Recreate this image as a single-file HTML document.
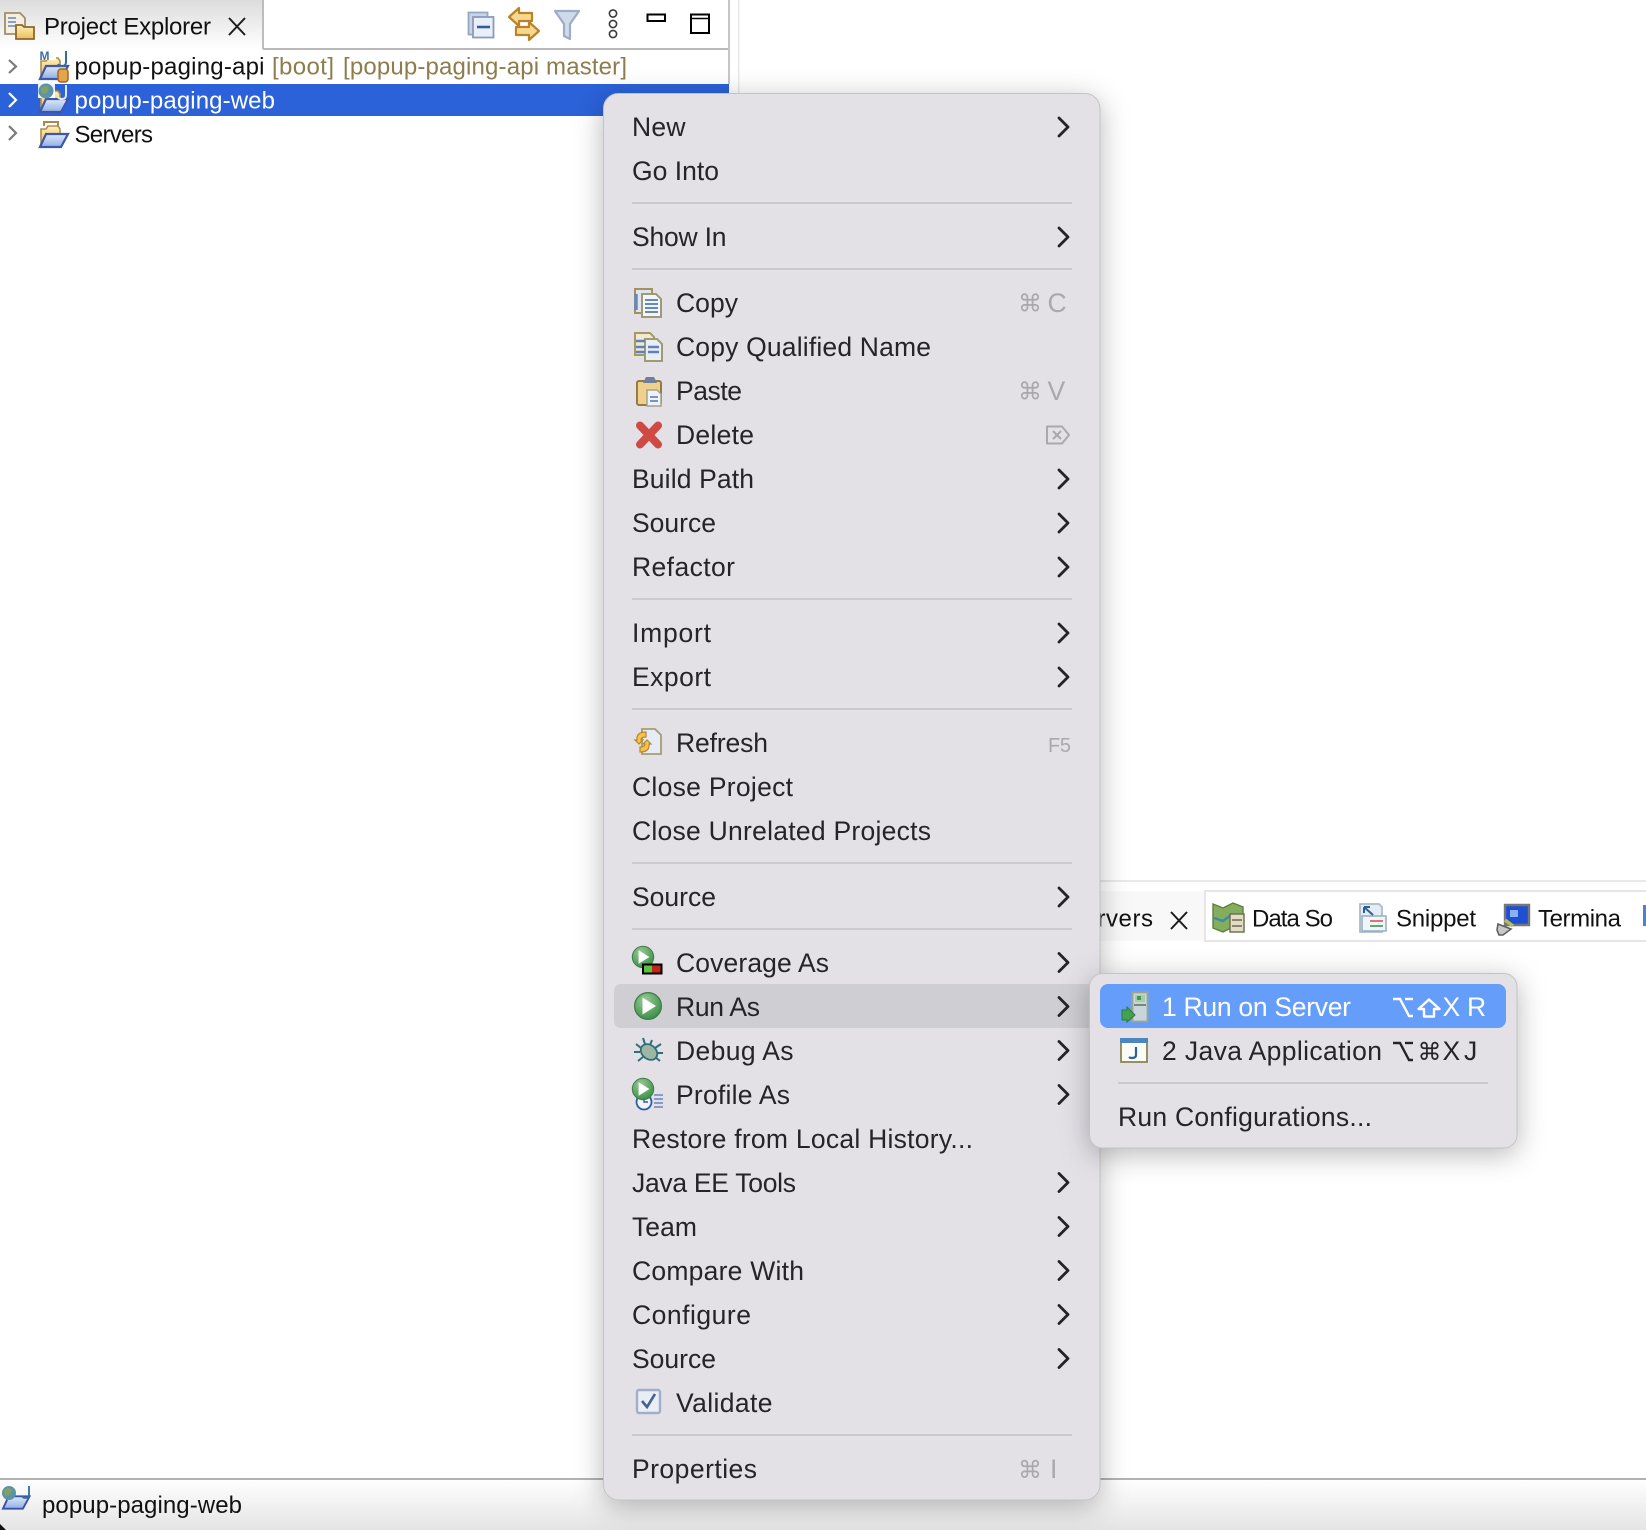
<!DOCTYPE html>
<html>
<head>
<meta charset="utf-8">
<title>Project Explorer</title>
<style>
html,body{margin:0;padding:0;background:#fff;width:1646px;height:1530px;overflow:hidden}
svg{display:block}
text{font-family:"Liberation Sans","DejaVu Sans",sans-serif;font-size:26.5px;fill:#252427}
.t{font-size:24px;fill:#111}
.g{fill:#a9a8ac}
.o{font-size:24px;fill:#8f7c4d}
.c{fill:none;stroke:#232225;stroke-width:2.8;stroke-linecap:round;stroke-linejoin:round}
</style>
</head>
<body>
<svg width="1646" height="1530" viewBox="0 0 1646 1530" xmlns="http://www.w3.org/2000/svg">
<defs>
<linearGradient id="top" x1="0" y1="0" x2="0" y2="1"><stop offset="0" stop-color="#dcdcdc"/><stop offset="1" stop-color="#fff"/></linearGradient>
<linearGradient id="bot" x1="0" y1="0" x2="0" y2="1"><stop offset="0" stop-color="#fff"/><stop offset="1" stop-color="#e4e4e4"/></linearGradient>
<linearGradient id="fol" x1="0" y1="0" x2="0" y2="1"><stop offset="0" stop-color="#fff0b8"/><stop offset="1" stop-color="#ecbd5c"/></linearGradient>
<linearGradient id="blu" x1="0" y1="0" x2="0" y2="1"><stop offset="0" stop-color="#dfe9f9"/><stop offset="1" stop-color="#8fb0e4"/></linearGradient>
<radialGradient id="grn" cx=".4" cy=".3" r=".8"><stop offset="0" stop-color="#9cc99a"/><stop offset="1" stop-color="#2f8a3c"/></radialGradient>
<filter id="sh" x="-20%" y="-20%" width="140%" height="140%"><feDropShadow dx="0" dy="6" stdDeviation="14" flood-color="#000" flood-opacity=".28"/></filter>
<g id="ofol">
<path d="M2 8h5l2-3h10l2 3v15H2z" fill="url(#fol)" stroke="#ad8f50" stroke-width="1.6"/>
<path d="M1 26L7 13h22l-7 13z" fill="url(#blu)" stroke="#3f56ad" stroke-width="2.2"/>
</g>
<g id="play">
<circle cx="0" cy="0" r="13.4" fill="url(#grn)" stroke="#3d7a45" stroke-width="1.2"/>
<path d="M-5.5-8.5L8 0-5.5 8.5z" fill="#fff"/>
</g>
</defs>

<!-- top tab bar -->
<rect x="0" y="0" width="263" height="49" fill="url(#top)"/>
<rect x="262" y="0" width="2" height="49" fill="#bdbdbd"/>
<rect x="263" y="48" width="466" height="2" fill="#b9b9b9"/>
<rect x="728" y="0" width="2" height="84" fill="#c6c6c6"/>
<rect x="738" y="0" width="1.5" height="94" fill="#e9e9e9"/>

<!-- project explorer tab icon -->
<path d="M5 13h15l5 5v16H5z" fill="#f3efe2" stroke="#a08f66" stroke-width="1.8"/>
<path d="M8 18h8M8 22h8M8 26h8" stroke="#7d97bf" stroke-width="1.8"/>
<path d="M16 25h6l2 2h10v12H16z" fill="url(#fol)" stroke="#8f672b" stroke-width="1.8"/>
<text x="44" y="34.500" class="t" textLength="167" lengthAdjust="spacing">Project Explorer</text>
<path d="M229 18l16 17M245 18l-16 17" stroke="#1c1c1c" stroke-width="2" fill="none"/>

<!-- toolbar -->
<rect x="468.500" y="12.500" width="19" height="22" fill="#c9d5e6" stroke="#95a8c3" stroke-width="1.800"/>
<rect x="473" y="17" width="20.500" height="20.500" fill="#e8eff9" stroke="#8b9bb4" stroke-width="1.800"/>
<path d="M477 27h13" stroke="#2f5f96" stroke-width="2.600"/>
<path d="M509 17l10-9v5h13v8h-13v5z" fill="#f8d88f" stroke="#b98428" stroke-width="2.200" stroke-linejoin="round"/>
<path d="M539 31l-10 9v-5h-13v-8h13v-5z" fill="#f8d88f" stroke="#b98428" stroke-width="2.200" stroke-linejoin="round"/>
<path d="M555 11h24l-9 13v15l-6-3V24z" fill="#cfdbea" stroke="#9cadc5" stroke-width="2.200" stroke-linejoin="round"/>
<g fill="none" stroke="#3a3a3a" stroke-width="1.600"><circle cx="613" cy="13.500" r="3.600"/><circle cx="613" cy="24" r="3.600"/><circle cx="613" cy="34" r="3.600"/></g>
<rect x="647.500" y="14.500" width="17.500" height="6.500" fill="#fff" stroke="#000" stroke-width="2"/>
<rect x="691" y="14.500" width="18" height="18.500" fill="#fff" stroke="#000" stroke-width="2"/>
<path d="M690 18.500h19" stroke="#000" stroke-width="1.600"/>

<!-- tree -->
<rect x="0" y="84" width="729" height="32" fill="#2b62d9"/>
<path d="M9 60l7 6.500-7 6.500" fill="none" stroke="#7b7b7b" stroke-width="2.200"/>
<path d="M9 93l7 7-7 7" fill="none" stroke="#fff" stroke-width="2.200"/>
<path d="M9 126l7 7-7 7" fill="none" stroke="#7b7b7b" stroke-width="2.200"/>

<g transform="translate(39,53)"><use href="#ofol"/></g>
<rect x="40" y="50" width="16" height="10" fill="#fff"/>
<text x="39.500" y="60" style="font-size:12px;font-weight:bold;fill:#3c6fa8">M</text>
<path d="M66 51v11q0 4-4 4-3 0-4-2" fill="none" stroke="#2f6ca6" stroke-width="2"/>
<rect x="58" y="69" width="10" height="13" rx="3" fill="#e4a64a" stroke="#a8651d" stroke-width="1.500"/>
<text x="74.500" y="74.500" class="t" textLength="190" lengthAdjust="spacing">popup-paging-api</text>
<text x="272" y="74.500" class="o" textLength="62" lengthAdjust="spacing">[boot]</text>
<text x="343" y="74.500" class="o" textLength="284" lengthAdjust="spacing">[popup-paging-api master]</text>

<g transform="translate(39,86)"><use href="#ofol"/></g>
<rect x="38" y="83" width="17" height="15" fill="#fff" opacity=".9"/>
<circle cx="46" cy="91" r="7.500" fill="#5c93a8"/><path d="M41 88q5-4 8 0l-2 5-5 1z" fill="#7fa268"/>
<path d="M66 85v10q0 4-4 4-3 0-4-2" fill="none" stroke="#dfe8fb" stroke-width="2"/>
<text x="74.500" y="108.500" class="t" textLength="200.500" lengthAdjust="spacing" style="fill:#fff">popup-paging-web</text>

<g transform="translate(39,121)"><use href="#ofol"/></g>
<path d="M44 126v-4h14v4" fill="none" stroke="#a88a4a" stroke-width="2"/>
<text x="74.500" y="142.500" class="t" textLength="78.500" lengthAdjust="spacing">Servers</text>

<!-- lower tabs -->
<rect x="1100" y="880" width="546" height="2" fill="#e9e9e9"/>
<rect x="1100" y="891" width="105" height="50" fill="#f8f8f8"/>
<rect x="1205" y="891" width="441" height="50" fill="#fff"/>
<rect x="1205" y="890" width="441" height="2" fill="#e6e6e6"/>
<rect x="1205" y="940" width="441" height="2" fill="#e6e6e6"/>
<rect x="1204" y="890" width="2" height="52" fill="#e6e6e6"/>
<text x="1067" y="926.500" class="t" textLength="86" lengthAdjust="spacing">Servers</text>
<path d="M1171 912l16 17M1187 912l-16 17" stroke="#1c1c1c" stroke-width="2" fill="none"/>
<path d="M1213 904l10 4 10-5 10 4v24l-10-4-10 5-10-4z" fill="#84ad5d" stroke="#5e7f3f" stroke-width="1.400"/>
<path d="M1214 918l9 3 8-6" fill="none" stroke="#3b8ca8" stroke-width="2.500"/>
<rect x="1230" y="914" width="14" height="18" fill="#e4ddc5" stroke="#6a6a4f" stroke-width="1.400"/>
<path d="M1232 920h10M1232 926h10" stroke="#6a6a4f" stroke-width="1.600"/>
<text x="1252" y="926.500" class="t" textLength="81" lengthAdjust="spacing">Data So</text>
<path d="M1360 904h19l3 3v25h-22z" fill="#e4ecf4" stroke="#a8bccb" stroke-width="1.800"/>
<rect x="1362" y="916" width="24" height="15" fill="#f0f6fb" stroke="#9ab1c7" stroke-width="1.600"/>
<path d="M1364 907l9 8M1364 907v6M1364 907h6" stroke="#2e5f96" stroke-width="2" fill="none"/>
<path d="M1370 921h13" stroke="#d86a5a" stroke-width="1.800"/><path d="M1370 926h13" stroke="#56a05c" stroke-width="1.800"/>
<text x="1396" y="926.500" class="t" textLength="80" lengthAdjust="spacing">Snippet</text>
<path d="M1505 905h24v20h-24z" fill="#1f4fd3" stroke="#77777a" stroke-width="2.400"/>
<rect x="1510" y="910" width="8" height="7" fill="#8ab2f2"/>
<path d="M1498 924l13 5-8 6h-4l-2-5z" fill="#c8c8c8" stroke="#5f5f5f" stroke-width="1.600"/>
<path d="M1505 920l8 6" stroke="#b8bd5a" stroke-width="3.500"/>
<text x="1538" y="926.500" class="t" textLength="83" lengthAdjust="spacing">Termina</text>
<rect x="1643" y="905" width="4" height="21" fill="#4d7fd6"/>

<!-- status bar -->
<rect x="0" y="1479" width="1646" height="51" fill="url(#bot)"/>
<rect x="0" y="1478" width="1646" height="2" fill="#b2b2b2"/>
<g transform="translate(2,1484) scale(.95)"><path d="M1 26L7 13h22l-7 13z" fill="url(#blu)" stroke="#3a52ad" stroke-width="2"/></g>
<circle cx="9" cy="1493" r="7" fill="#5c93a8"/><path d="M4 1490q5-4 8 0l-2 5-5 1z" fill="#7fa268"/>
<path d="M29 1486v9q0 3-4 3-2 0-3-2" fill="none" stroke="#2f6ca6" stroke-width="1.800"/>
<text x="42" y="1513" class="t" textLength="200" lengthAdjust="spacing">popup-paging-web</text>
<path d="M0 1524l6 6H0z" fill="#111"/>

<!-- main menu -->
<rect x="603.500" y="93.500" width="496.500" height="1406.500" rx="15" fill="#e3e1e6" stroke="#c3c2c6" stroke-width="1" filter="url(#sh)"/>
<rect x="614" y="984" width="480" height="44" rx="7" fill="#cfced3"/>

<g fill="#ccc9cf">
<rect x="632" y="202" width="440" height="2"/>
<rect x="632" y="268" width="440" height="2"/>
<rect x="632" y="598" width="440" height="2"/>
<rect x="632" y="708" width="440" height="2"/>
<rect x="632" y="862" width="440" height="2"/>
<rect x="632" y="928" width="440" height="2"/>
<rect x="632" y="1434" width="440" height="2"/>
</g>

<text x="632" y="136" textLength="53.500" lengthAdjust="spacing">New</text>
<text x="632" y="180" textLength="87" lengthAdjust="spacing">Go Into</text>
<text x="632" y="246" textLength="94.500" lengthAdjust="spacing">Show In</text>
<text x="676" y="312" textLength="62" lengthAdjust="spacing">Copy</text>
<text x="676" y="356" textLength="255" lengthAdjust="spacing">Copy Qualified Name</text>
<text x="676" y="400" textLength="66" lengthAdjust="spacing">Paste</text>
<text x="676" y="444" textLength="78" lengthAdjust="spacing">Delete</text>
<text x="632" y="488" textLength="122" lengthAdjust="spacing">Build Path</text>
<text x="632" y="532" textLength="84" lengthAdjust="spacing">Source</text>
<text x="632" y="576" textLength="103" lengthAdjust="spacing">Refactor</text>
<text x="632" y="642" textLength="79" lengthAdjust="spacing">Import</text>
<text x="632" y="686" textLength="79" lengthAdjust="spacing">Export</text>
<text x="676" y="752" textLength="92" lengthAdjust="spacing">Refresh</text>
<text x="632" y="796" textLength="161" lengthAdjust="spacing">Close Project</text>
<text x="632" y="840" textLength="299" lengthAdjust="spacing">Close Unrelated Projects</text>
<text x="632" y="906" textLength="84" lengthAdjust="spacing">Source</text>
<text x="676" y="972" textLength="153" lengthAdjust="spacing">Coverage As</text>
<text x="676" y="1016" textLength="84" lengthAdjust="spacing">Run As</text>
<text x="676" y="1060" textLength="117.500" lengthAdjust="spacing">Debug As</text>
<text x="676" y="1104" textLength="114" lengthAdjust="spacing">Profile As</text>
<text x="632" y="1148" textLength="341" lengthAdjust="spacing">Restore from Local History...</text>
<text x="632" y="1192" textLength="164" lengthAdjust="spacing">Java EE Tools</text>
<text x="632" y="1236" textLength="65" lengthAdjust="spacing">Team</text>
<text x="632" y="1280" textLength="172" lengthAdjust="spacing">Compare With</text>
<text x="632" y="1324" textLength="119" lengthAdjust="spacing">Configure</text>
<text x="632" y="1368" textLength="84" lengthAdjust="spacing">Source</text>
<text x="676" y="1412" textLength="96.500" lengthAdjust="spacing">Validate</text>
<text x="632" y="1478" textLength="125" lengthAdjust="spacing">Properties</text>

<!-- shortcuts -->
<text x="1018" y="311.500" class="g" style="font-size:24px">⌘</text><text x="1047.500" y="312" class="g">C</text>
<text x="1018" y="399.500" class="g" style="font-size:24px">⌘</text><text x="1047.500" y="400" class="g">V</text>
<path d="M1047 426.500h15l7 8.500-7 8.500h-15z" fill="none" stroke="#a9a8ac" stroke-width="2" stroke-linejoin="round"/>
<path d="M1053 431l8 8M1061 431l-8 8" stroke="#a9a8ac" stroke-width="2"/>
<text x="1048" y="752" class="g" textLength="23" lengthAdjust="spacing" style="font-size:20px">F5</text>
<text x="1018" y="1478" class="g" style="font-size:24px">⌘</text><text x="1050" y="1478" class="g">I</text>

<!-- chevrons -->
<path class="c" d="M1059 118l9 9-9 9"/>
<path class="c" d="M1059 228l9 9-9 9"/>
<path class="c" d="M1059 470l9 9-9 9"/>
<path class="c" d="M1059 514l9 9-9 9"/>
<path class="c" d="M1059 558l9 9-9 9"/>
<path class="c" d="M1059 624l9 9-9 9"/>
<path class="c" d="M1059 668l9 9-9 9"/>
<path class="c" d="M1059 888l9 9-9 9"/>
<path class="c" d="M1059 953.500l9 9-9 9"/>
<path class="c" d="M1059 997.500l9 9-9 9"/>
<path class="c" d="M1059 1041.500l9 9-9 9"/>
<path class="c" d="M1059 1085.500l9 9-9 9"/>
<path class="c" d="M1059 1173.500l9 9-9 9"/>
<path class="c" d="M1059 1217.500l9 9-9 9"/>
<path class="c" d="M1059 1261.500l9 9-9 9"/>
<path class="c" d="M1059 1305.500l9 9-9 9"/>
<path class="c" d="M1059 1349.500l9 9-9 9"/>

<!-- Copy icon -->
<path d="M635 289h17v24h-17z" fill="#dfe5ee" stroke="#a3925e" stroke-width="2"/>
<path d="M642 294h14l5 5v18h-19z" fill="#f2f5fa" stroke="#9f9a75" stroke-width="2"/>
<path d="M645 300h13M645 304h13M645 308h13M645 312h13" stroke="#6689b8" stroke-width="2"/>
<path d="M636 294v16" stroke="#6689b8" stroke-width="3.500"/>
<!-- Copy qualified icon -->
<path d="M635 333h15l4 4v18h-19z" fill="#efe9d4" stroke="#a8975f" stroke-width="2"/>
<path d="M645 339h12l5 5v17h-17z" fill="#e9eef6" stroke="#a09a70" stroke-width="2"/>
<path d="M636 341h9M636 347h9M636 352h9" stroke="#5f82b4" stroke-width="2.400"/>
<path d="M648 347h11M648 352h11" stroke="#5f82b4" stroke-width="2.400"/>
<!-- Paste icon -->
<rect x="637" y="381" width="24" height="24" rx="2" fill="#efd08c" stroke="#957a42" stroke-width="2"/>
<path d="M643 383l3-6h8l3 6z" fill="#6d7f9a"/>
<path d="M647 390h10l4 4v12h-14z" fill="#eef2f8" stroke="#a0a48a" stroke-width="1.500"/>
<path d="M650 397h8M650 401h8" stroke="#6689b8" stroke-width="1.800"/>
<!-- Delete icon -->
<path d="M640 425.500L658 444.500M658 425.500L640 444.500" stroke="#cf4a44" stroke-width="8" stroke-linecap="round"/>
<!-- Refresh icon -->
<path d="M642 729h13l6 6v19h-19z" fill="#e6ecf7" stroke="#a89d68" stroke-width="1.800"/>
<path d="M646 732q-10 0-9 8l-2 0 4 4 4-4-2 0q0-3 5-3zM640 752q10 0 9-8l2 0-4-4-4 4 2 0q0 3-5 3z" fill="#f6c34e" stroke="#b8862c" stroke-width="1.200"/>
<!-- Coverage -->
<g transform="translate(643,957) scale(.8)"><use href="#play"/></g>
<rect x="643" y="964.500" width="18.500" height="9" fill="#c0261c" stroke="#000" stroke-width="2"/>
<rect x="644" y="965.500" width="8" height="7" fill="#5cc23c"/>
<!-- Run -->
<g transform="translate(648,1006)"><use href="#play"/></g>
<!-- Debug -->
<g stroke="#2f6e78" stroke-width="2" fill="none">
<path d="M636 1044l5 4M661 1044l-6 4M634 1052h6M663 1053h-7M638 1061l5-4M660 1061l-5-4M643 1038l2 6M652 1040l-2 5"/>
</g>
<ellipse cx="649" cy="1052" rx="9" ry="7" fill="#9db8a2" stroke="#2f6e78" stroke-width="1.800" transform="rotate(40 649 1052)"/>
<!-- Profile -->
<circle cx="644" cy="1102" r="7.500" fill="#f2f4fa" stroke="#2a5ea6" stroke-width="1.800"/>
<path d="M644 1098v4h4" fill="none" stroke="#2a5ea6" stroke-width="1.400"/>
<path d="M654 1095h9M654 1099h9M654 1103h9M654 1107h9" stroke="#7a93c4" stroke-width="1.800"/>
<g transform="translate(643,1089) scale(.8)"><use href="#play"/></g>
<!-- Validate -->
<rect x="637" y="1390" width="23" height="23" rx="2" fill="#e9edf6" stroke="#a2aec8" stroke-width="2.400"/>
<path d="M642 1401l5 6 8-13" fill="none" stroke="#45618f" stroke-width="2.600"/>

<!-- sub menu -->
<rect x="1089.500" y="973.500" width="427.500" height="174.500" rx="13" fill="#e3e1e6" stroke="#c3c2c6" stroke-width="1" filter="url(#sh)"/>
<rect x="1100" y="984" width="406" height="44" rx="8" fill="#659dfb"/>
<rect x="1118" y="1082" width="370" height="2" fill="#ccc9cf"/>

<rect x="1132.500" y="992.500" width="15" height="29" fill="#c9d5dd" stroke="#9fa48e" stroke-width="1.800"/>
<rect x="1135" y="995" width="10" height="7" fill="#a8cfa8"/><rect x="1137" y="996" width="4" height="4" fill="#3f9c4c"/>
<path d="M1134 1005h12" stroke="#6f806c" stroke-width="1.800"/>
<path d="M1122 1010h5v-3l8 8-8 7v-2h-5z" fill="#43a250" stroke="#2d7a3a" stroke-width="1"/>
<text x="1162" y="1016" textLength="189" lengthAdjust="spacing" style="fill:#fff">1 Run on Server</text>
<path d="M1393 999h7l9 17h4" fill="none" stroke="#fff" stroke-width="2.400"/><path d="M1405 999h8" stroke="#fff" stroke-width="2.400"/>
<path d="M1418.500 1009l10.500-9.500 10.500 9.500h-5.500v7.500h-10v-7.500z" fill="none" stroke="#fff" stroke-width="2.400" stroke-linejoin="round"/>
<text x="1442.500" y="1016" style="fill:#fff">X</text>
<text x="1467" y="1016" style="fill:#fff">R</text>

<rect x="1121" y="1039" width="26" height="23" fill="#fbfbf5" stroke="#8b8557" stroke-width="1.800"/>
<rect x="1120" y="1038" width="28" height="5" fill="#4c86bf"/>
<path d="M1136 1047v8q0 3-4 3-2 0-3-1" fill="none" stroke="#2f5f9c" stroke-width="2.200"/>
<text x="1162" y="1060" textLength="220" lengthAdjust="spacing">2 Java Application</text>
<path d="M1393 1043h7l9 17h4" fill="none" stroke="#252427" stroke-width="2.400"/><path d="M1405 1043h8" stroke="#252427" stroke-width="2.400"/>
<text x="1417.500" y="1060" style="font-size:24px">⌘</text>
<text x="1442.500" y="1060">X</text>
<text x="1464" y="1060">J</text>
<text x="1118" y="1126" textLength="254" lengthAdjust="spacing">Run Configurations...</text>
</svg>
</body>
</html>
